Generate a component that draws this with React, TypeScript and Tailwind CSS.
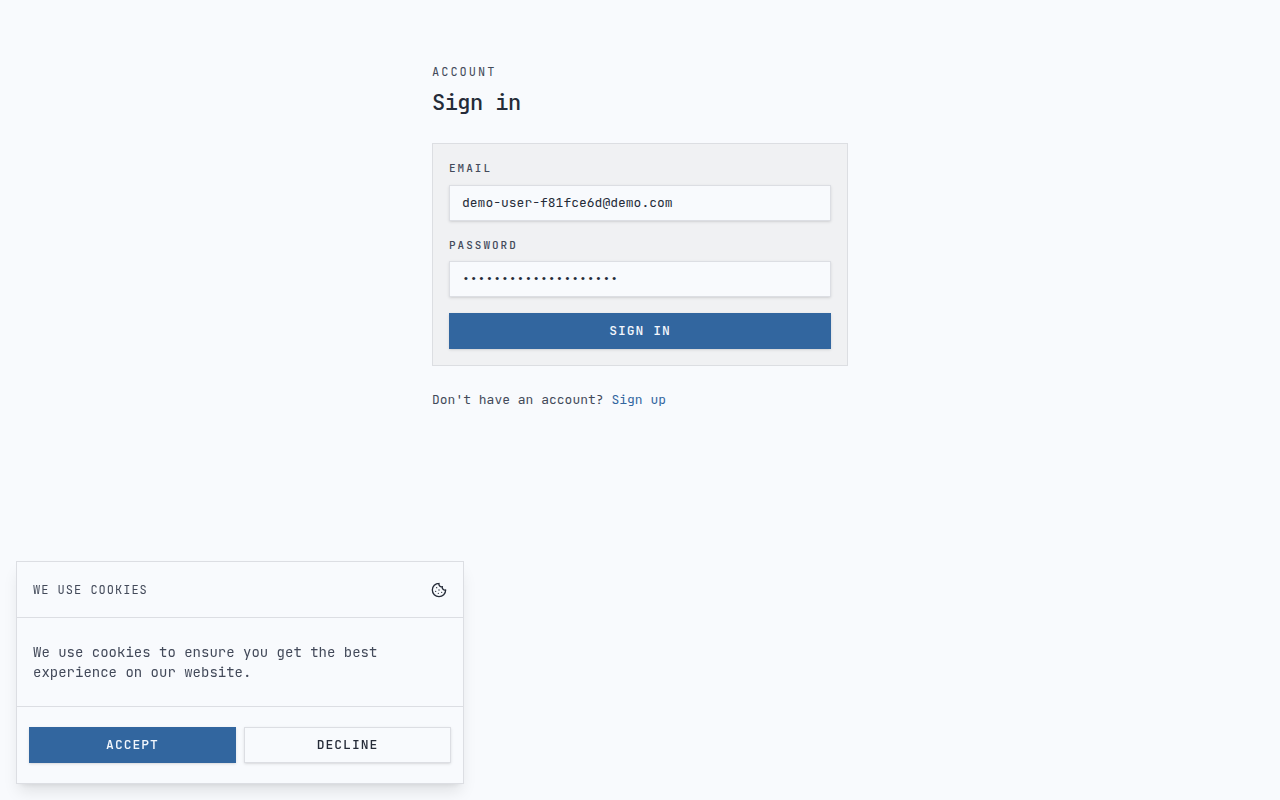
import { Cookie } from "lucide-react";

const labelClass = "text-[11px] leading-[17px] font-medium tracking-[2px] uppercase text-[#434a5a]";
const inputClass =
  "h-9 w-full border border-[#dcdee3] bg-[#f8fafd] px-3 pb-[2px] text-[13px] text-[#252b38] shadow-sm outline-none focus:border-[#32669f]";
const buttonClass =
  "flex h-9 w-full items-center justify-center border text-[13px] font-medium tracking-[1px] uppercase shadow-sm";
const primaryClass = "border-[#32669f] bg-[#32669f] text-[#f3f7fd]";
const outlineClass = "border-[#dcdee3] bg-[#f8fafd] text-[#252b38]";

function SignInForm() {
  return (
    <form
      className="flex flex-col gap-4 border border-[#dcdee2] bg-[#f0f1f3] p-4"
      onSubmit={(event) => event.preventDefault()}
    >
      <div className="flex flex-col gap-4">
        <div className="flex flex-col gap-2">
          <label htmlFor="email" className={labelClass}>Email</label>
          <input id="email" type="email" defaultValue="demo-user-f81fce6d@demo.com" className={inputClass} />
        </div>
        <div className="flex flex-col gap-[7px]">
          <label htmlFor="password" className={labelClass}>Password</label>
          <input id="password" type="password" defaultValue="abcdefghij0123456789" className={inputClass} />
        </div>
      </div>
      <button type="submit" className={`${buttonClass} ${primaryClass}`}>Sign in</button>
    </form>
  );
}

function CookieBanner() {
  return (
    <section
      aria-labelledby="cookie-title"
      className="fixed bottom-4 left-4 w-[calc(100%-2rem)] max-w-md border border-[#dcdee3] bg-[#f8fafd] shadow-lg"
    >
      <header className="flex h-14 items-center justify-between border-b border-[#dcdee3] px-4">
        <h2 id="cookie-title" className="text-xs tracking-[1px] uppercase text-[#434a5a]">We use cookies</h2>
        <Cookie size={16} className="text-[#252b38]" aria-hidden="true" />
      </header>
      <p className="px-4 py-6 text-sm leading-5 text-[#434a5a]">
        We use cookies to ensure you get the best experience on our website.
      </p>
      <div className="grid grid-cols-2 gap-2 border-t border-[#dcdee3] px-3 py-5">
        <button type="button" className={`${buttonClass} ${primaryClass}`}>Accept</button>
        <button type="button" className={`${buttonClass} ${outlineClass}`}>Decline</button>
      </div>
    </section>
  );
}

export default function App() {
  return (
    <div className="min-h-screen bg-[#f8fafd] px-4 py-16 font-['JetBrains_Mono','DejaVu_Sans_Mono',monospace] text-[#252b38]">
      <main className="mx-auto flex w-full max-w-[416px] flex-col">
        <header className="mb-6">
          <p className="text-xs leading-4 tracking-[2px] uppercase text-[#434a5a]">Account</p>
          <h1 className="mt-2 pb-[2px] text-[22px] leading-[29px] font-medium tracking-tight">Sign in</h1>
        </header>
        <SignInForm />
        <p className="mt-6 text-[13px] leading-5 text-[#434a5a]">
          Don't have an account? <a href="#sign-up" className="text-[#32669f]">Sign up</a>
        </p>
      </main>
      <CookieBanner />
    </div>
  );
}
